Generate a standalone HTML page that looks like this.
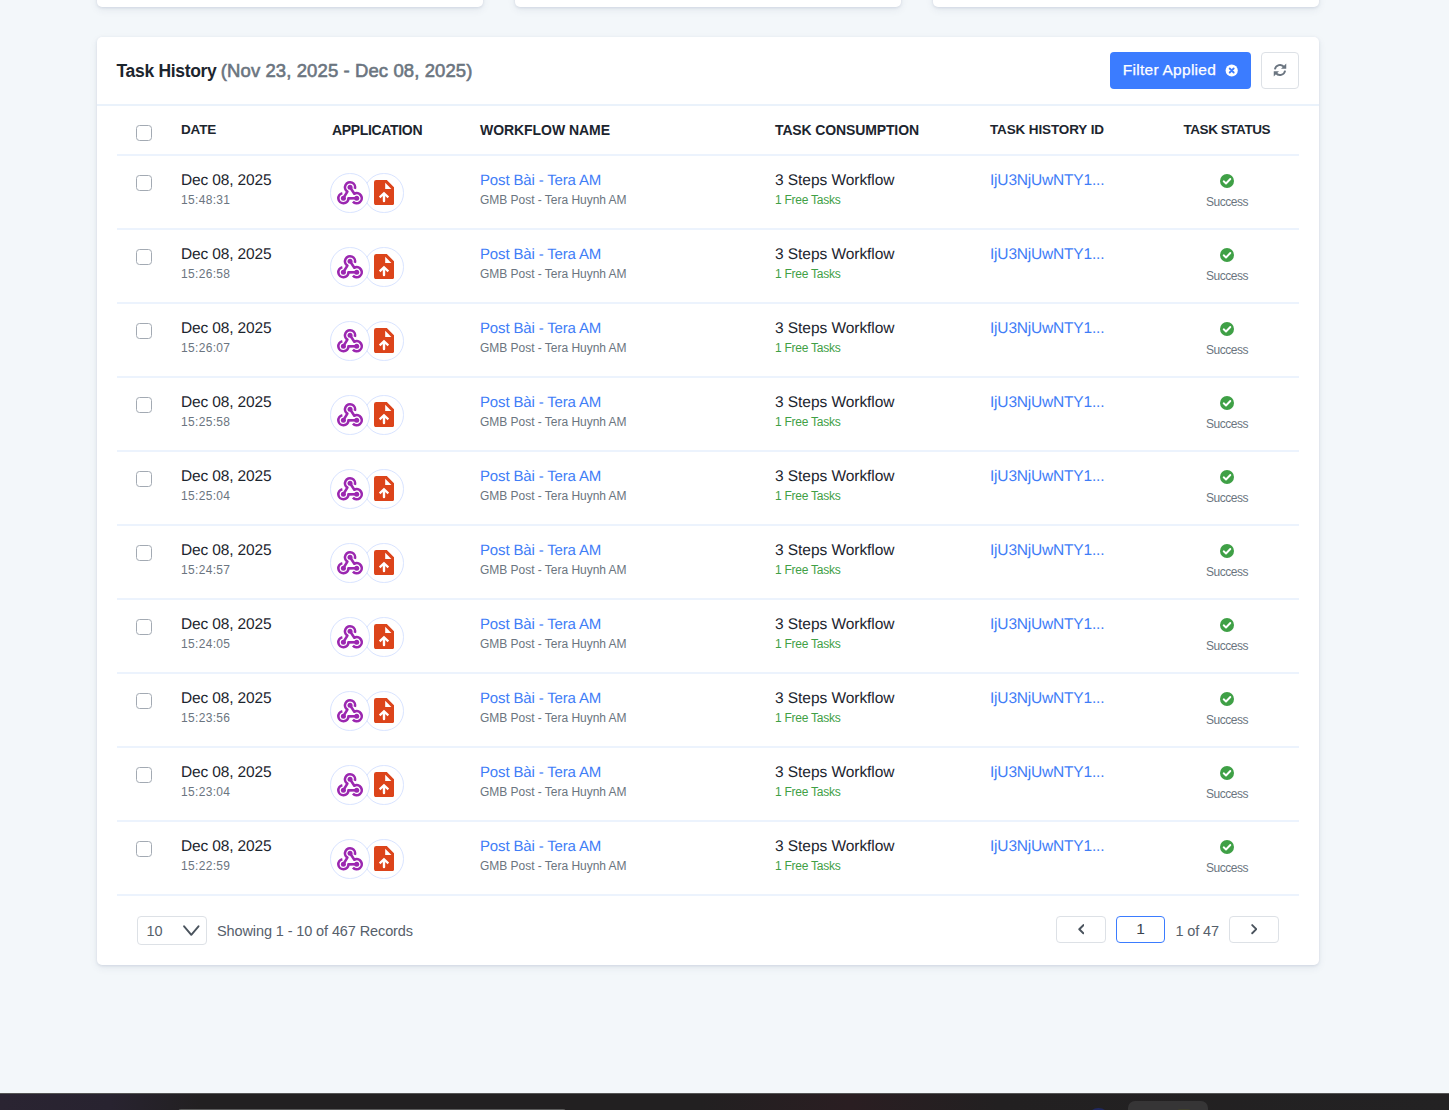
<!DOCTYPE html>
<html lang="en"><head><meta charset="utf-8"><title>Task History</title>
<style>
*{box-sizing:border-box;margin:0;padding:0}
html,body{width:1449px;height:1110px;overflow:hidden}
body{background:#f3f7fa;font-family:"Liberation Sans",sans-serif;color:#1c252e;position:relative}
.topcard{position:absolute;top:-20px;height:27px;width:386px;background:#fff;border-radius:5px;box-shadow:0 1px 3px rgba(45,60,105,.13),0 3px 9px rgba(45,60,105,.07)}
.card{position:absolute;left:97px;top:37px;width:1222px;height:928px;background:#fff;border-radius:5px;box-shadow:0 1px 3px rgba(45,60,105,.13),0 3px 9px rgba(45,60,105,.07)}
.hdr{position:absolute;left:0;top:0;width:100%;height:69px;border-bottom:2px solid #eaf2fb}
.title{position:absolute;left:20px;top:22px;font-size:18px;line-height:24px;font-weight:700;white-space:nowrap;color:#1c252e}
.title .t1{position:absolute;left:-0.5px;top:0;font-size:17.5px;letter-spacing:-0.314px;}
.title .t2{position:absolute;left:103.8px;top:0;color:#6b7580;font-weight:400;font-size:18.5px;-webkit-text-stroke:0.6px #6b7580;letter-spacing:0.097px;}
.btn{position:absolute;left:1013px;top:15px;width:141px;height:37px;background:#3b7cff;border-radius:4px;color:#fff;font-size:15.5px;-webkit-text-stroke:0.25px #fff;line-height:37px;white-space:nowrap}
.btn span{position:absolute;left:12.8px;top:-1.1px;letter-spacing:0.261px;}
.btn svg{position:absolute;left:115px;top:12px}
.rbtn{position:absolute;left:1164px;top:15px;width:38px;height:37px;border:1px solid #dde1e6;border-radius:4px;background:#fff}
.rbtn svg{position:absolute;left:10.6px;top:10.4px}
.tbl{position:absolute;left:20px;top:70px;width:1182px}
.tr{position:relative;height:74px;border-bottom:2px solid #ecf3fd}
.tr.th{height:49px}
.th div{position:absolute;top:14px;font-size:14px;line-height:18px;font-weight:700;white-space:nowrap;color:#1c252e}
.cb{position:absolute;left:19px;width:16px;height:16px;border:1.25px solid #a3aab3;border-radius:3.5px;background:#fff}
.c{position:absolute;white-space:nowrap}
.l1{font-size:15.5px;line-height:18px;top:15.8px;text-rendering:geometricPrecision}
.l2{font-size:12px;line-height:14px;top:37px;color:#6b7580}
.blue{color:#3f7df7}
.green{color:#3fa046}
.circ{position:absolute;top:17.2px;width:39.5px;height:39.5px;border-radius:50%;border:1.2px solid #d9e4ff;background:#fff}
.circ svg{position:absolute}
.ic-wh{left:-1.2px;top:-1.2px}
.ic-file{left:8.3px;top:5.8px}
.ic-ok{position:absolute;left:1103px;top:18px}
.suc{position:absolute;left:1060px;width:100px;text-align:center;top:39px;font-size:12px;line-height:15px;color:#6b7580}
.foot{position:absolute;left:0;top:859px;width:100%;height:69px}
.sel{position:absolute;left:40px;top:20px;width:70px;height:29px;border:1px solid #dde1e6;border-radius:4px;font-size:14.5px;line-height:28px;color:#56606b}
.sel span{position:absolute;left:8.5px;top:0}
.sel svg{position:absolute;left:45px;top:8px}
.show{position:absolute;left:120px;top:21px;font-size:14.5px;line-height:29px;color:#56606b;white-space:nowrap;letter-spacing:-0.110px;}
.pg{position:absolute;top:20px;width:50px;height:27px;border:1px solid #dde1e6;border-radius:4px;background:#fff}
.pg svg{position:absolute;left:20.9px;top:7.2px}
.pin{position:absolute;left:1019px;top:20px;width:49px;height:27px;border:1.5px solid #3b7cff;border-radius:4px;font-size:15.5px;line-height:24px;text-align:center;color:#3a434d}
.pof{position:absolute;left:1078.5px;top:21px;font-size:14.5px;line-height:29px;color:#56606b;white-space:nowrap;letter-spacing:-0.124px;}
.dark{position:absolute;left:0;top:1093px;width:1449px;height:17px;background:linear-gradient(90deg,#2a2432 0,#282330 110px,#222021 200px,#222021 700px,#2a1e22 850px,#222021 1000px,#232223 100%);border-top:1px solid #555}
.dark .a{position:absolute;left:1128px;top:7px;width:80px;height:20px;border-radius:7px;background:#363536}
.dark .b{position:absolute;left:178px;top:14.6px;width:388px;height:6px;border-radius:3px;background:#5c5c5c}
.dark .c2{position:absolute;left:1088px;top:13.6px;width:21px;height:12px;border-radius:10px 10px 0 0;background:#20285f}
.dark .d{position:absolute;left:1177px;top:14.5px;width:14px;height:6px;border-radius:3px;background:#3f3f2c}
.th div.h1{font-size:13.5px;letter-spacing:-0.150px;}.h2{letter-spacing:-0.336px;}.h3{letter-spacing:-0.055px;}.h4{letter-spacing:-0.131px;}.th div.h5{font-size:13.5px;letter-spacing:-0.126px;}.th div.h6{font-size:13.5px;letter-spacing:-0.450px;}
.dt{letter-spacing:-0.138px;}.tm{letter-spacing:0.326px;}.wf{font-size:15px;letter-spacing:-0.156px;}.gm{letter-spacing:-0.025px;}.st{letter-spacing:-0.055px;}.fr{letter-spacing:-0.253px;}.idt{letter-spacing:-0.189px;}.su{letter-spacing:-0.510px;}
</style></head><body>
<div class="topcard" style="left:97px"></div>
<div class="topcard" style="left:515px"></div>
<div class="topcard" style="left:933px"></div>
<div class="card">
<div class="hdr">
<div class="title"><span class="t1">Task History</span> <span class="t2">(Nov 23, 2025 - Dec 08, 2025)</span></div>
<div class="btn"><span>Filter Applied</span><svg width="13" height="13" viewBox="0 0 13 13"><circle cx="6.7" cy="6.5" r="6.1" fill="#fff"/><path d="M4.7 4.5 L8.7 8.5 M8.7 4.5 L4.7 8.5" stroke="#3b7cff" stroke-width="1.8" stroke-linecap="round"/></svg></div>
<div class="rbtn"><svg width="14" height="14" viewBox="0 0 15 15"><g fill="none" stroke="#6b7580" stroke-width="2"><path d="M2 6.8 A5.6 5.6 0 0 1 12 4.4"/><path d="M13 8.2 A5.6 5.6 0 0 1 3 10.6"/></g><path d="M14.2 0.6 V6.2 H8.6 Z" fill="#6b7580"/><path d="M0.8 14.4 V8.8 H6.4 Z" fill="#6b7580"/></svg></div>
</div>
<div class="tbl">
<div class="tr th"><span class="cb" style="top:18px"></span>
<div class="h1" style="left:64px">DATE</div><div class="h2" style="left:215px">APPLICATION</div><div class="h3" style="left:363px">WORKFLOW NAME</div><div class="h4" style="left:658px">TASK CONSUMPTION</div><div class="h5" style="left:873px">TASK HISTORY ID</div><div class="h6" style="left:1066.5px">TASK STATUS</div></div>
<div class="tr"><span class="cb" style="top:19px"></span>
<span class="c l1 dt" style="left:64px">Dec 08, 2025</span><span class="c l2 tm" style="left:64px">15:48:31</span>
<span class="circ" style="left:247.3px"><svg class="ic-file" viewBox="0 0 20.2 25.2" width="20.2" height="25.2"><path d="M2.3 0 H12.8 L20.2 7.5 V22.9 A2.3 2.3 0 0 1 17.9 25.2 H2.3 A2.3 2.3 0 0 1 0 22.9 V2.3 A2.3 2.3 0 0 1 2.3 0 Z" fill="#dc441a"/><path d="M11.2 2.8 L17.4 9.1 H11.2 Z" fill="#fff"/><path d="M10 11.7 L15.1 16.6 L13.6 18.2 L11.2 15.9 V21 A1.2 1.2 0 0 1 8.8 21 V15.9 L6.4 18.2 L4.9 16.6 Z" fill="#fff"/></svg></span><span class="circ" style="left:213px"><svg class="ic-wh" viewBox="0 0 40 40" width="40" height="40"><g fill="none" stroke="#9b27b0" stroke-width="2.6" stroke-linejoin="round"><path d="M24.85 15.86 A5.05 5.05 0 1 0 17.37 18.58 L13.4 25.2"/><path d="M12.35 20.26 A5.05 5.05 0 1 0 18.45 25.38 L26.7 25.2"/><path d="M22.95 28.58 A5.05 5.05 0 1 0 24.33 20.74 L20.05 14.3"/></g><g fill="#9b27b0"><circle cx="20.05" cy="14.3" r="2.5"/><circle cx="13.4" cy="25.2" r="2.5"/><circle cx="26.7" cy="25.2" r="2.5"/></g></svg></span>
<span class="c l1 blue wf" style="left:363px">Post Bài - Tera AM</span><span class="c l2 gm" style="left:363px">GMB Post - Tera Huynh AM</span>
<span class="c l1 st" style="left:658px">3 Steps Workflow</span><span class="c l2 green fr" style="left:658px">1 Free Tasks</span>
<span class="c l1 blue idt" style="left:873px">IjU3NjUwNTY1...</span>
<svg class="ic-ok" viewBox="0 0 14 14" width="14" height="14"><circle cx="7" cy="7" r="7" fill="#3fa046"/><path d="M3.7 7.3 L6 9.5 L10.3 5" fill="none" stroke="#fff" stroke-width="1.9" stroke-linecap="round" stroke-linejoin="round"/></svg><span class="suc"><span class="su">Success</span></span></div>
<div class="tr"><span class="cb" style="top:19px"></span>
<span class="c l1 dt" style="left:64px">Dec 08, 2025</span><span class="c l2 tm" style="left:64px">15:26:58</span>
<span class="circ" style="left:247.3px"><svg class="ic-file" viewBox="0 0 20.2 25.2" width="20.2" height="25.2"><path d="M2.3 0 H12.8 L20.2 7.5 V22.9 A2.3 2.3 0 0 1 17.9 25.2 H2.3 A2.3 2.3 0 0 1 0 22.9 V2.3 A2.3 2.3 0 0 1 2.3 0 Z" fill="#dc441a"/><path d="M11.2 2.8 L17.4 9.1 H11.2 Z" fill="#fff"/><path d="M10 11.7 L15.1 16.6 L13.6 18.2 L11.2 15.9 V21 A1.2 1.2 0 0 1 8.8 21 V15.9 L6.4 18.2 L4.9 16.6 Z" fill="#fff"/></svg></span><span class="circ" style="left:213px"><svg class="ic-wh" viewBox="0 0 40 40" width="40" height="40"><g fill="none" stroke="#9b27b0" stroke-width="2.6" stroke-linejoin="round"><path d="M24.85 15.86 A5.05 5.05 0 1 0 17.37 18.58 L13.4 25.2"/><path d="M12.35 20.26 A5.05 5.05 0 1 0 18.45 25.38 L26.7 25.2"/><path d="M22.95 28.58 A5.05 5.05 0 1 0 24.33 20.74 L20.05 14.3"/></g><g fill="#9b27b0"><circle cx="20.05" cy="14.3" r="2.5"/><circle cx="13.4" cy="25.2" r="2.5"/><circle cx="26.7" cy="25.2" r="2.5"/></g></svg></span>
<span class="c l1 blue wf" style="left:363px">Post Bài - Tera AM</span><span class="c l2 gm" style="left:363px">GMB Post - Tera Huynh AM</span>
<span class="c l1 st" style="left:658px">3 Steps Workflow</span><span class="c l2 green fr" style="left:658px">1 Free Tasks</span>
<span class="c l1 blue idt" style="left:873px">IjU3NjUwNTY1...</span>
<svg class="ic-ok" viewBox="0 0 14 14" width="14" height="14"><circle cx="7" cy="7" r="7" fill="#3fa046"/><path d="M3.7 7.3 L6 9.5 L10.3 5" fill="none" stroke="#fff" stroke-width="1.9" stroke-linecap="round" stroke-linejoin="round"/></svg><span class="suc"><span class="su">Success</span></span></div>
<div class="tr"><span class="cb" style="top:19px"></span>
<span class="c l1 dt" style="left:64px">Dec 08, 2025</span><span class="c l2 tm" style="left:64px">15:26:07</span>
<span class="circ" style="left:247.3px"><svg class="ic-file" viewBox="0 0 20.2 25.2" width="20.2" height="25.2"><path d="M2.3 0 H12.8 L20.2 7.5 V22.9 A2.3 2.3 0 0 1 17.9 25.2 H2.3 A2.3 2.3 0 0 1 0 22.9 V2.3 A2.3 2.3 0 0 1 2.3 0 Z" fill="#dc441a"/><path d="M11.2 2.8 L17.4 9.1 H11.2 Z" fill="#fff"/><path d="M10 11.7 L15.1 16.6 L13.6 18.2 L11.2 15.9 V21 A1.2 1.2 0 0 1 8.8 21 V15.9 L6.4 18.2 L4.9 16.6 Z" fill="#fff"/></svg></span><span class="circ" style="left:213px"><svg class="ic-wh" viewBox="0 0 40 40" width="40" height="40"><g fill="none" stroke="#9b27b0" stroke-width="2.6" stroke-linejoin="round"><path d="M24.85 15.86 A5.05 5.05 0 1 0 17.37 18.58 L13.4 25.2"/><path d="M12.35 20.26 A5.05 5.05 0 1 0 18.45 25.38 L26.7 25.2"/><path d="M22.95 28.58 A5.05 5.05 0 1 0 24.33 20.74 L20.05 14.3"/></g><g fill="#9b27b0"><circle cx="20.05" cy="14.3" r="2.5"/><circle cx="13.4" cy="25.2" r="2.5"/><circle cx="26.7" cy="25.2" r="2.5"/></g></svg></span>
<span class="c l1 blue wf" style="left:363px">Post Bài - Tera AM</span><span class="c l2 gm" style="left:363px">GMB Post - Tera Huynh AM</span>
<span class="c l1 st" style="left:658px">3 Steps Workflow</span><span class="c l2 green fr" style="left:658px">1 Free Tasks</span>
<span class="c l1 blue idt" style="left:873px">IjU3NjUwNTY1...</span>
<svg class="ic-ok" viewBox="0 0 14 14" width="14" height="14"><circle cx="7" cy="7" r="7" fill="#3fa046"/><path d="M3.7 7.3 L6 9.5 L10.3 5" fill="none" stroke="#fff" stroke-width="1.9" stroke-linecap="round" stroke-linejoin="round"/></svg><span class="suc"><span class="su">Success</span></span></div>
<div class="tr"><span class="cb" style="top:19px"></span>
<span class="c l1 dt" style="left:64px">Dec 08, 2025</span><span class="c l2 tm" style="left:64px">15:25:58</span>
<span class="circ" style="left:247.3px"><svg class="ic-file" viewBox="0 0 20.2 25.2" width="20.2" height="25.2"><path d="M2.3 0 H12.8 L20.2 7.5 V22.9 A2.3 2.3 0 0 1 17.9 25.2 H2.3 A2.3 2.3 0 0 1 0 22.9 V2.3 A2.3 2.3 0 0 1 2.3 0 Z" fill="#dc441a"/><path d="M11.2 2.8 L17.4 9.1 H11.2 Z" fill="#fff"/><path d="M10 11.7 L15.1 16.6 L13.6 18.2 L11.2 15.9 V21 A1.2 1.2 0 0 1 8.8 21 V15.9 L6.4 18.2 L4.9 16.6 Z" fill="#fff"/></svg></span><span class="circ" style="left:213px"><svg class="ic-wh" viewBox="0 0 40 40" width="40" height="40"><g fill="none" stroke="#9b27b0" stroke-width="2.6" stroke-linejoin="round"><path d="M24.85 15.86 A5.05 5.05 0 1 0 17.37 18.58 L13.4 25.2"/><path d="M12.35 20.26 A5.05 5.05 0 1 0 18.45 25.38 L26.7 25.2"/><path d="M22.95 28.58 A5.05 5.05 0 1 0 24.33 20.74 L20.05 14.3"/></g><g fill="#9b27b0"><circle cx="20.05" cy="14.3" r="2.5"/><circle cx="13.4" cy="25.2" r="2.5"/><circle cx="26.7" cy="25.2" r="2.5"/></g></svg></span>
<span class="c l1 blue wf" style="left:363px">Post Bài - Tera AM</span><span class="c l2 gm" style="left:363px">GMB Post - Tera Huynh AM</span>
<span class="c l1 st" style="left:658px">3 Steps Workflow</span><span class="c l2 green fr" style="left:658px">1 Free Tasks</span>
<span class="c l1 blue idt" style="left:873px">IjU3NjUwNTY1...</span>
<svg class="ic-ok" viewBox="0 0 14 14" width="14" height="14"><circle cx="7" cy="7" r="7" fill="#3fa046"/><path d="M3.7 7.3 L6 9.5 L10.3 5" fill="none" stroke="#fff" stroke-width="1.9" stroke-linecap="round" stroke-linejoin="round"/></svg><span class="suc"><span class="su">Success</span></span></div>
<div class="tr"><span class="cb" style="top:19px"></span>
<span class="c l1 dt" style="left:64px">Dec 08, 2025</span><span class="c l2 tm" style="left:64px">15:25:04</span>
<span class="circ" style="left:247.3px"><svg class="ic-file" viewBox="0 0 20.2 25.2" width="20.2" height="25.2"><path d="M2.3 0 H12.8 L20.2 7.5 V22.9 A2.3 2.3 0 0 1 17.9 25.2 H2.3 A2.3 2.3 0 0 1 0 22.9 V2.3 A2.3 2.3 0 0 1 2.3 0 Z" fill="#dc441a"/><path d="M11.2 2.8 L17.4 9.1 H11.2 Z" fill="#fff"/><path d="M10 11.7 L15.1 16.6 L13.6 18.2 L11.2 15.9 V21 A1.2 1.2 0 0 1 8.8 21 V15.9 L6.4 18.2 L4.9 16.6 Z" fill="#fff"/></svg></span><span class="circ" style="left:213px"><svg class="ic-wh" viewBox="0 0 40 40" width="40" height="40"><g fill="none" stroke="#9b27b0" stroke-width="2.6" stroke-linejoin="round"><path d="M24.85 15.86 A5.05 5.05 0 1 0 17.37 18.58 L13.4 25.2"/><path d="M12.35 20.26 A5.05 5.05 0 1 0 18.45 25.38 L26.7 25.2"/><path d="M22.95 28.58 A5.05 5.05 0 1 0 24.33 20.74 L20.05 14.3"/></g><g fill="#9b27b0"><circle cx="20.05" cy="14.3" r="2.5"/><circle cx="13.4" cy="25.2" r="2.5"/><circle cx="26.7" cy="25.2" r="2.5"/></g></svg></span>
<span class="c l1 blue wf" style="left:363px">Post Bài - Tera AM</span><span class="c l2 gm" style="left:363px">GMB Post - Tera Huynh AM</span>
<span class="c l1 st" style="left:658px">3 Steps Workflow</span><span class="c l2 green fr" style="left:658px">1 Free Tasks</span>
<span class="c l1 blue idt" style="left:873px">IjU3NjUwNTY1...</span>
<svg class="ic-ok" viewBox="0 0 14 14" width="14" height="14"><circle cx="7" cy="7" r="7" fill="#3fa046"/><path d="M3.7 7.3 L6 9.5 L10.3 5" fill="none" stroke="#fff" stroke-width="1.9" stroke-linecap="round" stroke-linejoin="round"/></svg><span class="suc"><span class="su">Success</span></span></div>
<div class="tr"><span class="cb" style="top:19px"></span>
<span class="c l1 dt" style="left:64px">Dec 08, 2025</span><span class="c l2 tm" style="left:64px">15:24:57</span>
<span class="circ" style="left:247.3px"><svg class="ic-file" viewBox="0 0 20.2 25.2" width="20.2" height="25.2"><path d="M2.3 0 H12.8 L20.2 7.5 V22.9 A2.3 2.3 0 0 1 17.9 25.2 H2.3 A2.3 2.3 0 0 1 0 22.9 V2.3 A2.3 2.3 0 0 1 2.3 0 Z" fill="#dc441a"/><path d="M11.2 2.8 L17.4 9.1 H11.2 Z" fill="#fff"/><path d="M10 11.7 L15.1 16.6 L13.6 18.2 L11.2 15.9 V21 A1.2 1.2 0 0 1 8.8 21 V15.9 L6.4 18.2 L4.9 16.6 Z" fill="#fff"/></svg></span><span class="circ" style="left:213px"><svg class="ic-wh" viewBox="0 0 40 40" width="40" height="40"><g fill="none" stroke="#9b27b0" stroke-width="2.6" stroke-linejoin="round"><path d="M24.85 15.86 A5.05 5.05 0 1 0 17.37 18.58 L13.4 25.2"/><path d="M12.35 20.26 A5.05 5.05 0 1 0 18.45 25.38 L26.7 25.2"/><path d="M22.95 28.58 A5.05 5.05 0 1 0 24.33 20.74 L20.05 14.3"/></g><g fill="#9b27b0"><circle cx="20.05" cy="14.3" r="2.5"/><circle cx="13.4" cy="25.2" r="2.5"/><circle cx="26.7" cy="25.2" r="2.5"/></g></svg></span>
<span class="c l1 blue wf" style="left:363px">Post Bài - Tera AM</span><span class="c l2 gm" style="left:363px">GMB Post - Tera Huynh AM</span>
<span class="c l1 st" style="left:658px">3 Steps Workflow</span><span class="c l2 green fr" style="left:658px">1 Free Tasks</span>
<span class="c l1 blue idt" style="left:873px">IjU3NjUwNTY1...</span>
<svg class="ic-ok" viewBox="0 0 14 14" width="14" height="14"><circle cx="7" cy="7" r="7" fill="#3fa046"/><path d="M3.7 7.3 L6 9.5 L10.3 5" fill="none" stroke="#fff" stroke-width="1.9" stroke-linecap="round" stroke-linejoin="round"/></svg><span class="suc"><span class="su">Success</span></span></div>
<div class="tr"><span class="cb" style="top:19px"></span>
<span class="c l1 dt" style="left:64px">Dec 08, 2025</span><span class="c l2 tm" style="left:64px">15:24:05</span>
<span class="circ" style="left:247.3px"><svg class="ic-file" viewBox="0 0 20.2 25.2" width="20.2" height="25.2"><path d="M2.3 0 H12.8 L20.2 7.5 V22.9 A2.3 2.3 0 0 1 17.9 25.2 H2.3 A2.3 2.3 0 0 1 0 22.9 V2.3 A2.3 2.3 0 0 1 2.3 0 Z" fill="#dc441a"/><path d="M11.2 2.8 L17.4 9.1 H11.2 Z" fill="#fff"/><path d="M10 11.7 L15.1 16.6 L13.6 18.2 L11.2 15.9 V21 A1.2 1.2 0 0 1 8.8 21 V15.9 L6.4 18.2 L4.9 16.6 Z" fill="#fff"/></svg></span><span class="circ" style="left:213px"><svg class="ic-wh" viewBox="0 0 40 40" width="40" height="40"><g fill="none" stroke="#9b27b0" stroke-width="2.6" stroke-linejoin="round"><path d="M24.85 15.86 A5.05 5.05 0 1 0 17.37 18.58 L13.4 25.2"/><path d="M12.35 20.26 A5.05 5.05 0 1 0 18.45 25.38 L26.7 25.2"/><path d="M22.95 28.58 A5.05 5.05 0 1 0 24.33 20.74 L20.05 14.3"/></g><g fill="#9b27b0"><circle cx="20.05" cy="14.3" r="2.5"/><circle cx="13.4" cy="25.2" r="2.5"/><circle cx="26.7" cy="25.2" r="2.5"/></g></svg></span>
<span class="c l1 blue wf" style="left:363px">Post Bài - Tera AM</span><span class="c l2 gm" style="left:363px">GMB Post - Tera Huynh AM</span>
<span class="c l1 st" style="left:658px">3 Steps Workflow</span><span class="c l2 green fr" style="left:658px">1 Free Tasks</span>
<span class="c l1 blue idt" style="left:873px">IjU3NjUwNTY1...</span>
<svg class="ic-ok" viewBox="0 0 14 14" width="14" height="14"><circle cx="7" cy="7" r="7" fill="#3fa046"/><path d="M3.7 7.3 L6 9.5 L10.3 5" fill="none" stroke="#fff" stroke-width="1.9" stroke-linecap="round" stroke-linejoin="round"/></svg><span class="suc"><span class="su">Success</span></span></div>
<div class="tr"><span class="cb" style="top:19px"></span>
<span class="c l1 dt" style="left:64px">Dec 08, 2025</span><span class="c l2 tm" style="left:64px">15:23:56</span>
<span class="circ" style="left:247.3px"><svg class="ic-file" viewBox="0 0 20.2 25.2" width="20.2" height="25.2"><path d="M2.3 0 H12.8 L20.2 7.5 V22.9 A2.3 2.3 0 0 1 17.9 25.2 H2.3 A2.3 2.3 0 0 1 0 22.9 V2.3 A2.3 2.3 0 0 1 2.3 0 Z" fill="#dc441a"/><path d="M11.2 2.8 L17.4 9.1 H11.2 Z" fill="#fff"/><path d="M10 11.7 L15.1 16.6 L13.6 18.2 L11.2 15.9 V21 A1.2 1.2 0 0 1 8.8 21 V15.9 L6.4 18.2 L4.9 16.6 Z" fill="#fff"/></svg></span><span class="circ" style="left:213px"><svg class="ic-wh" viewBox="0 0 40 40" width="40" height="40"><g fill="none" stroke="#9b27b0" stroke-width="2.6" stroke-linejoin="round"><path d="M24.85 15.86 A5.05 5.05 0 1 0 17.37 18.58 L13.4 25.2"/><path d="M12.35 20.26 A5.05 5.05 0 1 0 18.45 25.38 L26.7 25.2"/><path d="M22.95 28.58 A5.05 5.05 0 1 0 24.33 20.74 L20.05 14.3"/></g><g fill="#9b27b0"><circle cx="20.05" cy="14.3" r="2.5"/><circle cx="13.4" cy="25.2" r="2.5"/><circle cx="26.7" cy="25.2" r="2.5"/></g></svg></span>
<span class="c l1 blue wf" style="left:363px">Post Bài - Tera AM</span><span class="c l2 gm" style="left:363px">GMB Post - Tera Huynh AM</span>
<span class="c l1 st" style="left:658px">3 Steps Workflow</span><span class="c l2 green fr" style="left:658px">1 Free Tasks</span>
<span class="c l1 blue idt" style="left:873px">IjU3NjUwNTY1...</span>
<svg class="ic-ok" viewBox="0 0 14 14" width="14" height="14"><circle cx="7" cy="7" r="7" fill="#3fa046"/><path d="M3.7 7.3 L6 9.5 L10.3 5" fill="none" stroke="#fff" stroke-width="1.9" stroke-linecap="round" stroke-linejoin="round"/></svg><span class="suc"><span class="su">Success</span></span></div>
<div class="tr"><span class="cb" style="top:19px"></span>
<span class="c l1 dt" style="left:64px">Dec 08, 2025</span><span class="c l2 tm" style="left:64px">15:23:04</span>
<span class="circ" style="left:247.3px"><svg class="ic-file" viewBox="0 0 20.2 25.2" width="20.2" height="25.2"><path d="M2.3 0 H12.8 L20.2 7.5 V22.9 A2.3 2.3 0 0 1 17.9 25.2 H2.3 A2.3 2.3 0 0 1 0 22.9 V2.3 A2.3 2.3 0 0 1 2.3 0 Z" fill="#dc441a"/><path d="M11.2 2.8 L17.4 9.1 H11.2 Z" fill="#fff"/><path d="M10 11.7 L15.1 16.6 L13.6 18.2 L11.2 15.9 V21 A1.2 1.2 0 0 1 8.8 21 V15.9 L6.4 18.2 L4.9 16.6 Z" fill="#fff"/></svg></span><span class="circ" style="left:213px"><svg class="ic-wh" viewBox="0 0 40 40" width="40" height="40"><g fill="none" stroke="#9b27b0" stroke-width="2.6" stroke-linejoin="round"><path d="M24.85 15.86 A5.05 5.05 0 1 0 17.37 18.58 L13.4 25.2"/><path d="M12.35 20.26 A5.05 5.05 0 1 0 18.45 25.38 L26.7 25.2"/><path d="M22.95 28.58 A5.05 5.05 0 1 0 24.33 20.74 L20.05 14.3"/></g><g fill="#9b27b0"><circle cx="20.05" cy="14.3" r="2.5"/><circle cx="13.4" cy="25.2" r="2.5"/><circle cx="26.7" cy="25.2" r="2.5"/></g></svg></span>
<span class="c l1 blue wf" style="left:363px">Post Bài - Tera AM</span><span class="c l2 gm" style="left:363px">GMB Post - Tera Huynh AM</span>
<span class="c l1 st" style="left:658px">3 Steps Workflow</span><span class="c l2 green fr" style="left:658px">1 Free Tasks</span>
<span class="c l1 blue idt" style="left:873px">IjU3NjUwNTY1...</span>
<svg class="ic-ok" viewBox="0 0 14 14" width="14" height="14"><circle cx="7" cy="7" r="7" fill="#3fa046"/><path d="M3.7 7.3 L6 9.5 L10.3 5" fill="none" stroke="#fff" stroke-width="1.9" stroke-linecap="round" stroke-linejoin="round"/></svg><span class="suc"><span class="su">Success</span></span></div>
<div class="tr"><span class="cb" style="top:19px"></span>
<span class="c l1 dt" style="left:64px">Dec 08, 2025</span><span class="c l2 tm" style="left:64px">15:22:59</span>
<span class="circ" style="left:247.3px"><svg class="ic-file" viewBox="0 0 20.2 25.2" width="20.2" height="25.2"><path d="M2.3 0 H12.8 L20.2 7.5 V22.9 A2.3 2.3 0 0 1 17.9 25.2 H2.3 A2.3 2.3 0 0 1 0 22.9 V2.3 A2.3 2.3 0 0 1 2.3 0 Z" fill="#dc441a"/><path d="M11.2 2.8 L17.4 9.1 H11.2 Z" fill="#fff"/><path d="M10 11.7 L15.1 16.6 L13.6 18.2 L11.2 15.9 V21 A1.2 1.2 0 0 1 8.8 21 V15.9 L6.4 18.2 L4.9 16.6 Z" fill="#fff"/></svg></span><span class="circ" style="left:213px"><svg class="ic-wh" viewBox="0 0 40 40" width="40" height="40"><g fill="none" stroke="#9b27b0" stroke-width="2.6" stroke-linejoin="round"><path d="M24.85 15.86 A5.05 5.05 0 1 0 17.37 18.58 L13.4 25.2"/><path d="M12.35 20.26 A5.05 5.05 0 1 0 18.45 25.38 L26.7 25.2"/><path d="M22.95 28.58 A5.05 5.05 0 1 0 24.33 20.74 L20.05 14.3"/></g><g fill="#9b27b0"><circle cx="20.05" cy="14.3" r="2.5"/><circle cx="13.4" cy="25.2" r="2.5"/><circle cx="26.7" cy="25.2" r="2.5"/></g></svg></span>
<span class="c l1 blue wf" style="left:363px">Post Bài - Tera AM</span><span class="c l2 gm" style="left:363px">GMB Post - Tera Huynh AM</span>
<span class="c l1 st" style="left:658px">3 Steps Workflow</span><span class="c l2 green fr" style="left:658px">1 Free Tasks</span>
<span class="c l1 blue idt" style="left:873px">IjU3NjUwNTY1...</span>
<svg class="ic-ok" viewBox="0 0 14 14" width="14" height="14"><circle cx="7" cy="7" r="7" fill="#3fa046"/><path d="M3.7 7.3 L6 9.5 L10.3 5" fill="none" stroke="#fff" stroke-width="1.9" stroke-linecap="round" stroke-linejoin="round"/></svg><span class="suc"><span class="su">Success</span></span></div>
</div>
<div class="foot">
<div class="sel"><span>10</span><svg width="17" height="12" viewBox="0 0 17 12"><path d="M1.1 1.3 L8.3 9.8 L15.5 1.3" fill="none" stroke="#4a535d" stroke-width="1.9" stroke-linecap="round" stroke-linejoin="round"/></svg></div>
<div class="show">Showing 1 - 10 of 467 Records</div>
<div class="pg" style="left:959px"><svg width="6.6" height="10.4" viewBox="0 0 6.6 10.4"><path d="M5.4 1.1 L1.3 5.2 L5.4 9.3" fill="none" stroke="#4a535d" stroke-width="2" stroke-linecap="round" stroke-linejoin="round"/></svg></div>
<div class="pin">1</div>
<div class="pof">1 of 47</div>
<div class="pg" style="left:1132px"><svg width="6.6" height="10.4" viewBox="0 0 6.6 10.4"><path d="M1.2 1.1 L5.3 5.2 L1.2 9.3" fill="none" stroke="#4a535d" stroke-width="1.9" stroke-linecap="round" stroke-linejoin="round"/></svg></div>
</div>
</div>
<div class="dark"><div class="a"></div><div class="b"></div><div class="c2"></div><div class="d"></div></div>
</body></html>
